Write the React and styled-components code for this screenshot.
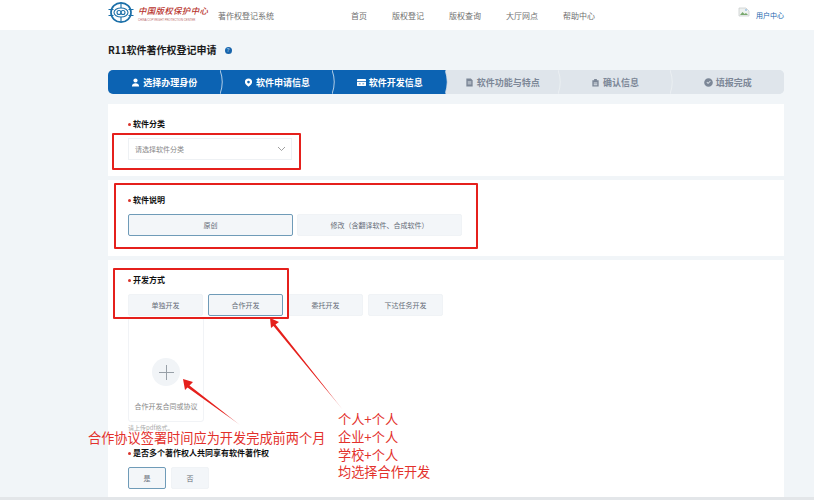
import React from 'react';
import styled, { createGlobalStyle } from 'styled-components';

const Global = createGlobalStyle`
  html, body { margin: 0; padding: 0; }
  body { width: 814px; height: 500px; overflow: hidden; background: #f1f5f8; font-family: "Noto Sans CJK SC", "Liberation Sans", sans-serif; }
`;
const Page = styled.div`position: relative; width: 814px; height: 500px; overflow: hidden; background: #f1f5f8;`;
const Header = styled.header`height: 30px; background: #fff; display: flex; align-items: center; padding-left: 108px; color: #707070;`;
const Logo = styled.div`display: flex; align-items: center; gap: 4px; width: 110px; margin-top: -5px;`;
const LogoText = styled.div`display: flex; flex-direction: column; line-height: 1;`;
const LogoCn = styled.span`font: italic 500 8.4px "Noto Sans CJK SC", serif; color: #b8322c; letter-spacing: .4px; white-space: nowrap;`;
const LogoEn = styled.span`font: 2.8px "Liberation Sans", sans-serif; color: #b8655f; margin-top: 2px; white-space: nowrap;`;
const SystemName = styled.span`font-size: 8px; width: 133px;`;
const Nav = styled.nav`display: flex; gap: 25px; font-size: 8px; width: 387px;`;
const UserBox = styled.div`display: flex; align-items: center; gap: 6px;`;
const BrokenImg = styled.svg`width: 12px; height: 14px; margin-top: -4px;`;
const UserLink = styled.span`font-size: 7px; color: #1a66ae;`;
const Main = styled.main`padding: 13px 30px 0 108px;`;
const TitleRow = styled.div`display: flex; align-items: center; gap: 8px; height: 14px;`;
const Title = styled.h1`margin: 0; font-size: 10px; font-weight: 700; color: #1a1a1a; line-height: 14px;`;
const Help = styled.span`width: 7px; height: 7px; border-radius: 50%; background: #1864ab; color: #9dc4e8; font: 700 5px/7px "Liberation Sans", sans-serif; text-align: center;`;
const Steps = styled.div`display: flex; height: 24px; margin-top: 13px; border-radius: 5px; overflow: hidden; background: #dfe5eb;`;
const Step = styled.div`
  position: relative; flex: 1; display: flex; align-items: center; justify-content: center; gap: 3px;
  font-size: 9px; font-weight: 700; color: ${p => p.$done ? '#fff' : '#7c8797'};
  background: ${p => p.$done ? '#0c63b3' : '#dfe5eb'};
`;
const Chevron = styled.svg`position: absolute; right: -3px; top: 0; width: 4px; height: 24px; z-index: 1;`;
const Card = styled.section`background: #fff; margin-top: ${p => p.$gap || 4}px; padding: 14px 20px 0; height: ${p => p.$h}px; box-sizing: border-box;`;
const Label = styled.div`font-size: 8px; font-weight: 700; color: #111; line-height: 12px; display: flex; align-items: center; gap: 2px; &::before { content: ''; width: 3px; height: 3px; border-radius: 50%; background: #d9342b; }`;
const Select = styled.div`width: 164px; height: 22px; margin-top: 8px; border: 1px solid #eef1f4; display: flex; align-items: center; justify-content: space-between; padding: 0 5px 0 6px; box-sizing: border-box; color: #888; font-size: 7px;`;
const Options = styled.div`display: flex; gap: ${p => p.$gap || 5}px; margin-top: 8px;`;
const Option = styled.div`
  width: ${p => p.$w}px; height: 22px; box-sizing: border-box; display: flex; align-items: center; justify-content: center;
  font-size: 7px; color: #666c78; background: #f3f6f9; border-radius: 2px;
  border: 1px solid ${p => p.$on ? '#6f9bb8' : '#f0f3f6'};
`;
const Upload = styled.div`width: 76px; height: 105px; margin-top: 1px; border: 1px solid #f1f3f6; border-radius: 3px; box-sizing: border-box; display: flex; flex-direction: column; align-items: center; padding-top: 40px;`;
const PlusCircle = styled.div`width: 28px; height: 28px; border-radius: 50%; background: #f1f4f7; display: flex; align-items: center; justify-content: center;`;
const UploadText = styled.div`font-size: 7px; color: #888; margin-top: 15px; white-space: nowrap;`;
const Hint = styled.div`font-size: 6px; line-height: 8px; color: #aaa; margin-top: 2px; height: 23px;`;
const Bottom = styled.div`position: absolute; left: 0; right: 0; bottom: 0; height: 3px; background: #e3e6e9;`;
const RedBox = styled.div`position: absolute; box-sizing: border-box; border: 2px solid #e5201c; border-radius: 1px; pointer-events: none; left: ${p => p.$x}px; top: ${p => p.$y}px; width: ${p => p.$w}px; height: ${p => p.$h}px;`;
const Arrows = styled.svg`position: absolute; left: 0; top: 0; width: 814px; height: 500px; pointer-events: none;`;
const NoteOne = styled.div`position: absolute; left: 88px; top: 428px; font-size: 13.2px; line-height: 20px; color: #e3312c; white-space: nowrap;`;
const NoteTwo = styled.div`position: absolute; left: 338px; top: 410px; font-size: 13.2px; line-height: 17.8px; color: #e3312c; white-space: nowrap;`;

const stepData = [
  ['选择办理身份', 'user', 1], ['软件申请信息', 'pin', 1], ['软件开发信息', 'cal', 1],
  ['软件功能与特点', 'doc', 0], ['确认信息', 'lock', 0], ['填报完成', 'check', 0],
];

const StepIcon = ({ kind, color }) => (
  <svg width="9" height="9" viewBox="0 0 10 10" fill={color}>
    {kind === 'user' && <><circle cx="5" cy="2.8" r="2.3" /><path d="M1 9.5c0-2.6 1.8-3.6 4-3.6s4 1 4 3.6z" /></>}
    {kind === 'pin' && <path fillRule="evenodd" d="M5 .5a4 4 0 0 1 4 4c0 2.3-2.4 4-4 5.2C3.4 8.500 1 6.800 1 4.500a4 4 0 0 1 4-4zm0 2.500a1.500 1.500 0 1 0 0 3 1.500 1.500 0 0 0 0-3z" />}
    {kind === 'cal' && <path fillRule="evenodd" d="M1 1h8a1 1 0 0 1 1 1v1.500H0V2a1 1 0 0 1 1-1zM0 4.500h10V8a1 1 0 0 1-1 1H1a1 1 0 0 1-1-1zm2 1.500v1h2V6zm4 0v1h2V6z" />}
    {kind === 'doc' && <path fillRule="evenodd" d="M1.500 .5h5L8.500 2.500v7h-7zM3 4v1h4V4zm0 2v1h4V6z" />}
    {kind === 'lock' && <path fillRule="evenodd" d="M3.500 1h3v1.500H8.500v7h-7v-7h2zM3 5v1h4V5zm0 2v1h4V7z" />}
    {kind === 'check' && <path fillRule="evenodd" d="M5 .2a4.800 4.800 0 1 1 0 9.600 4.800 4.800 0 0 1 0-9.600zM2.800 5l1.700 1.700 3-3-.7-.7-2.300 2.300-1-1z" />}
  </svg>
);

const LogoMark = () => (
  <svg width="26" height="21" viewBox="0 0 26 21" fill="none" stroke="#1b6fa8" strokeWidth="1.100">
    <ellipse cx="13" cy="10.500" rx="10" ry="9.600" strokeWidth="1.700" />
    <ellipse cx="13" cy="10.500" rx="7" ry="4.500" />
    <circle cx="11" cy="10.500" r="2" />
    <circle cx="15" cy="10.500" r="2" />
    <path d="M.5 7.500h5M.5 13.500h5M20.500 7.500h5M20.500 13.500h5M13 1v5M13 15v5" />
  </svg>
);

export default function App() {
  return (
    <Page>
      <Global />
      <Header>
        <Logo>
          <LogoMark />
          <LogoText>
            <LogoCn>中国版权保护中心</LogoCn>
            <LogoEn>CHINA COPYRIGHT PROTECTION CENTER</LogoEn>
          </LogoText>
        </Logo>
        <SystemName>著作权登记系统</SystemName>
        <Nav>
          <span>首页</span><span>版权登记</span><span>版权查询</span><span>大厅网点</span><span>帮助中心</span>
        </Nav>
        <UserBox>
          <BrokenImg viewBox="0 0 12 14">
            <path d="M1 2h7l3 3v5H1z" fill="#eef2f0" stroke="#c4c8c8" strokeWidth=".7" />
            <path d="M2 9l2.500-3 2 2 1.500-1 2 2z" fill="#79a86e" />
            <circle cx="8" cy="4" r="1" fill="#9cc3e6" />
          </BrokenImg>
          <UserLink>用户中心</UserLink>
        </UserBox>
      </Header>
      <Main>
        <TitleRow>
          <Title>R11软件著作权登记申请</Title>
          <Help>?</Help>
        </TitleRow>
        <Steps>
          {stepData.map(([label, icon, done], i) => (
            <Step key={label} $done={!!done}>
              <StepIcon kind={icon} color={done ? '#fff' : '#7c8797'} />
              {label}
              {i < 5 && (
                <Chevron viewBox="0 0 4 24">
                  <path d="M0 0 Q4.500 12 0 24 Z" fill={done ? '#0c63b3' : '#dfe5eb'} />
                  <path d="M0 0 Q4.500 12 0 24" fill="none" stroke={i === 2 ? '#dfe5eb' : done ? '#dce8f4' : '#eef1f4'} strokeWidth=".8" />
                </Chevron>
              )}
            </Step>
          ))}
        </Steps>
        <Card $gap={10} $h={72}>
          <Label>软件分类</Label>
          <Select>
            请选择软件分类
            <svg width="9" height="6" viewBox="0 0 9 6" fill="none" stroke="#888" strokeWidth=".8"><path d="M1 1l3.500 3.500L8 1" /></svg>
          </Select>
        </Card>
        <Card $h={76}>
          <Label>软件说明</Label>
          <Options $gap={4}>
            <Option $w={165} $on>原创</Option>
            <Option $w={165}>修改（含翻译软件、合成软件）</Option>
          </Options>
        </Card>
        <Card $h={237}>
          <Label>开发方式</Label>
          <Options>
            <Option $w={75}>单独开发</Option>
            <Option $w={75} $on>合作开发</Option>
            <Option $w={75}>委托开发</Option>
            <Option $w={75}>下达任务开发</Option>
          </Options>
          <Upload>
            <PlusCircle>
              <svg width="15" height="15" viewBox="0 0 15 15" stroke="#98a0a8" strokeWidth="1"><path d="M7.500 0v15M0 7.500h15" /></svg>
            </PlusCircle>
            <UploadText>合作开发合同或协议</UploadText>
          </Upload>
          <Hint>请上传pdf格式。</Hint>
          <Label>是否多个著作权人共同享有软件著作权</Label>
          <Options>
            <Option $w={38} $on>是</Option>
            <Option $w={38}>否</Option>
          </Options>
        </Card>
      </Main>
      <Bottom />
      <RedBox $x={112} $y={133} $w={189} $h={37} />
      <RedBox $x={114} $y={183} $w={364} $h={66} />
      <RedBox $x={113} $y={268} $w={176} $h={51} />
      <Arrows viewBox="0 0 814 500">
        <defs>
          <linearGradient id="fadeA" gradientUnits="userSpaceOnUse" x1="272" y1="322" x2="343" y2="410">
            <stop offset="0" stopColor="#e5201c" /><stop offset=".75" stopColor="#e5201c" /><stop offset="1" stopColor="#e8b0b0" />
          </linearGradient>
          <linearGradient id="fadeB" gradientUnits="userSpaceOnUse" x1="185" y1="382" x2="240" y2="425">
            <stop offset="0" stopColor="#e5201c" /><stop offset=".7" stopColor="#e5201c" /><stop offset="1" stopColor="#e8b0b0" />
          </linearGradient>
        </defs>
        <path d="M270 318 L279 322 L275.500 324.500 L343 410 L273.500 326 L271 328 Z" fill="url(#fadeA)" />
        <path d="M183 379 L193 382 L189.500 385.500 L240 425 L187.500 387.500 L185 390 Z" fill="url(#fadeB)" />
      </Arrows>
      <NoteOne>合作协议签署时间应为开发完成前两个月</NoteOne>
      <NoteTwo>个人+个人<br />企业+个人<br />学校+个人<br />均选择合作开发</NoteTwo>
    </Page>
  );
}
